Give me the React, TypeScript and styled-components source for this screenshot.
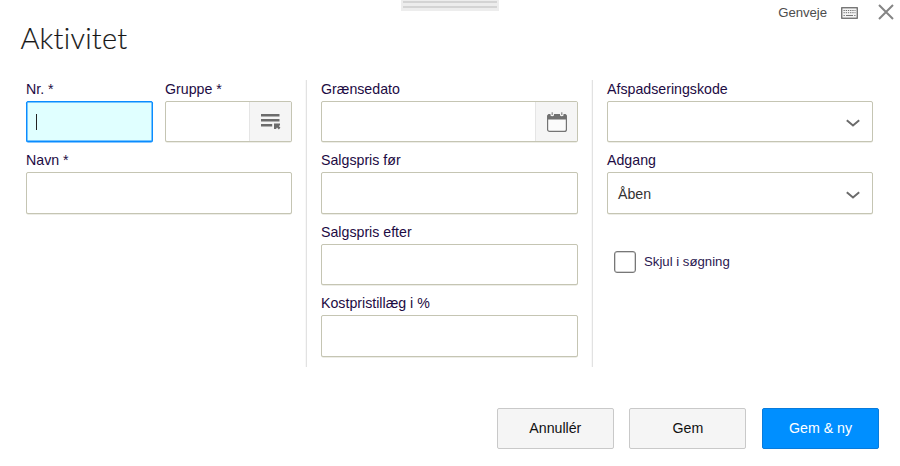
import React from "react";
import styled, { createGlobalStyle, css } from "styled-components";

const GlobalStyle = createGlobalStyle`
  *, *::before, *::after { box-sizing: border-box; }
  body { margin: 0; background: #fff; font-family: "Liberation Sans", Arial, sans-serif; }
  button, input { font: inherit; }
`;

const Dialog = styled.main`
  position: relative;
  display: flex;
  flex-direction: column;
  width: 900px;
  height: 466px;
  overflow: hidden;
  background: #fff;
`;

const DragHandle = styled.div`
  position: absolute;
  top: 0;
  left: 401px;
  width: 98px;
  height: 11px;
  padding: 1px 2px 0;
  background: #ededed;

  &::before,
  &::after {
    content: "";
    display: block;
    height: 2px;
    margin-bottom: 3px;
    background: #d4d4d4;
  }
`;

const TopBar = styled.div`
  display: flex;
  justify-content: flex-end;
  align-items: center;
  height: 26px;
  padding-right: 6px;
  flex: none;
`;

const Shortcut = styled.span`
  color: #4d4d4d;
  font-size: 13.2px;
  line-height: 16px;
  letter-spacing: -0.05px;
  margin-right: 14px;
`;

const KeyboardIcon = styled.svg`
  width: 17px;
  height: 12px;
  margin-right: 20px;
`;

const CloseIcon = styled.svg`
  width: 16px;
  height: 16px;
  margin-top: -3px;
`;

const Title = styled.h1`
  margin: -6px 0 0 20.5px;
  height: 59.85px;
  flex: none;
  color: #171717;
  font-family: Lato, sans-serif;
  font-size: 29px;
  font-weight: 300;
  line-height: 36px;
  letter-spacing: 0.2px;
  -webkit-text-stroke: 0.15px #171717;
`;

const Form = styled.form`
  display: grid;
  grid-template-columns: 280px 286px 295px;
  height: 286.7px;
  margin-left: 26px;
  flex: none;
`;

const Column = styled.section<{ $divided?: boolean }>`
  display: flex;
  flex-direction: column;
  padding-right: 14px;
  ${({ $divided }) =>
    $divided &&
    css`
      border-left: 1px solid #e2e2e2;
      padding-left: 14px;
      box-shadow: -1px 0 #f8f8f8;
    `}
`;

const FieldRow = styled.div`
  display: grid;
  grid-template-columns: 127px 127px;
  gap: 12px;
`;

const Field = styled.div`
  display: flex;
  flex-direction: column;
  height: 71.5px;
  flex: none;
`;

const Label = styled.label`
  height: 21px;
  flex: none;
  color: #1d0b43;
  font-size: 14.2px;
  line-height: 18px;
  white-space: nowrap;
`;

const Control = styled.div<{ $focused?: boolean }>`
  display: flex;
  align-items: center;
  height: 41.3px;
  flex: none;
  overflow: hidden;
  border: 1px solid ${({ $focused }) => ($focused ? "#0a8cff" : "#c5c5b3")};
  border-radius: 2px;
  background: ${({ $focused }) => ($focused ? "#e0ffff" : "#fff")};
  box-shadow: ${({ $focused }) =>
    $focused ? "inset 0 0 0 0.5px #0a8cff, 0 0.5px 0 #0a8cff" : "0 0.5px 0 #dcdccf"};
  color: #333;
  font-size: 14.2px;
`;

const Caret = styled.span`
  width: 1px;
  height: 16px;
  margin: 1px 0 0 9px;
  background: #222;
`;

const Value = styled.span`
  flex: 1;
  padding-left: 10px;
  padding-top: 2px;
`;

const Addon = styled.span`
  display: flex;
  align-items: center;
  justify-content: center;
  width: 42px;
  height: 100%;
  margin-left: auto;
  padding-top: 1px;
  border-left: 1px solid #e5e5e5;
  background: #f5f5f5;
`;

const Glyph = styled.svg<{ $w: number; $h: number }>`
  display: block;
  width: ${({ $w }) => $w}px;
  height: ${({ $h }) => $h}px;
`;

const Chevron = styled.svg`
  width: 14px;
  height: 8px;
  margin: 4px 12px 0 0;
`;

const CheckRow = styled.label`
  display: flex;
  align-items: center;
  gap: 8px;
  height: 22px;
  margin: 28px 0 0 7px;
  color: #2a1650;
  font-size: 13.2px;
`;

const CheckBox = styled.span`
  width: 22px;
  height: 22px;
  border: 1px solid #777;
  border-radius: 3px;
  background: #fff;
  box-shadow: inset 0 0 0 0.5px #aaa;
`;

const Footer = styled.footer`
  display: flex;
  justify-content: flex-end;
  gap: 15.6px;
  margin-top: 41.45px;
  padding-right: 21px;
`;

const Button = styled.button<{ $primary?: boolean }>`
  width: 117px;
  height: 41px;
  padding: 0;
  border: 1px solid ${({ $primary }) => ($primary ? "#087bdc" : "#c9c9c9")};
  border-radius: 2px;
  background: ${({ $primary }) => ($primary ? "#008fff" : "#f5f5f5")};
  color: ${({ $primary }) => ($primary ? "#fff" : "#111")};
  font-size: 14.2px;
`;

function ListPicker() {
  return (
    <Glyph $w={20} $h={17} viewBox="0 0 20 17">
      <path d="M0 1H18.5V3.5H0ZM0 6H18.5V8.5H0ZM0 11H11.2V13.5H0Z" fill="#6c6c6c" />
      <path d="M13 10.6H19V12.2L17.9 12.9L19.4 14.8L17.8 16.4L16 14.6L15 16H13Z" fill="#6c6c6c" />
    </Glyph>
  );
}

function Calendar() {
  return (
    <Glyph $w={20} $h={20} viewBox="0 0 20 20">
      <rect x="0.6" y="2.6" width="18.8" height="16.8" rx="2" fill="#fbfbfb" stroke="#747474" strokeWidth="1.2" />
      <path d="M0.5 7.6V4Q0.5 2 2.5 2H17.5Q19.5 2 19.5 4V7.6Z" fill="#707070" />
      <path d="M3.5 0H7V3.4Q5.2 5 3.5 3.4ZM13 0H16.5V3.4Q14.8 5 13 3.4Z" fill="#f5f5f5" />
      <path d="M5.2 0.2V3M14.8 0.2V3" stroke="#888" strokeWidth="1.2" />
    </Glyph>
  );
}

function Dropdown({ value = "" }: { value?: string }) {
  return (
    <Control>
      <Value>{value}</Value>
      <Chevron viewBox="0 0 14 8" fill="none">
        <path d="M0.8 1.3L7 6.4L13.2 1.3" stroke="#6b6b6b" strokeWidth="2" />
      </Chevron>
    </Control>
  );
}

function TextField({ label, children }: { label: string; children?: React.ReactNode }) {
  return (
    <Field>
      <Label>{label}</Label>
      {children ?? <Control />}
    </Field>
  );
}

export default function App() {
  return (
    <>
      <GlobalStyle />
      <Dialog>
        <DragHandle />
        <TopBar>
          <Shortcut>Genveje</Shortcut>
          <KeyboardIcon viewBox="0 0 17 12" fill="none">
            <rect x="0.75" y="0.75" width="15.5" height="10.5" fill="#f4f4f4" stroke="#606060" strokeWidth="1.2" />
            <path d="M2.5 3.5H14.5M2.5 5.7H14.5" stroke="#707070" strokeDasharray="1.3 0.9" />
            <path d="M2.5 8.5H3.8M5 8.5H12M13.2 8.5H14.5" stroke="#777" />
          </KeyboardIcon>
          <CloseIcon viewBox="0 0 16 16" fill="none">
            <path d="M1 1L15 15M15 1L1 15" stroke="#858585" strokeWidth="2" />
          </CloseIcon>
        </TopBar>
        <Title>Aktivitet</Title>
        <Form>
          <Column>
            <FieldRow>
              <TextField label="Nr. *">
                <Control $focused>
                  <Caret />
                </Control>
              </TextField>
              <TextField label="Gruppe *">
                <Control>
                  <Addon>
                    <ListPicker />
                  </Addon>
                </Control>
              </TextField>
            </FieldRow>
            <TextField label="Navn *" />
          </Column>
          <Column $divided>
            <TextField label="Grænsedato">
              <Control>
                <Addon>
                  <Calendar />
                </Addon>
              </Control>
            </TextField>
            <TextField label="Salgspris før" />
            <TextField label="Salgspris efter" />
            <TextField label="Kostpristillæg i %" />
          </Column>
          <Column $divided>
            <TextField label="Afspadseringskode">
              <Dropdown />
            </TextField>
            <TextField label="Adgang">
              <Dropdown value="Åben" />
            </TextField>
            <CheckRow>
              <CheckBox />
              Skjul i søgning
            </CheckRow>
          </Column>
        </Form>
        <Footer>
          <Button>Annullér</Button>
          <Button>Gem</Button>
          <Button $primary>Gem &amp; ny</Button>
        </Footer>
      </Dialog>
    </>
  );
}
